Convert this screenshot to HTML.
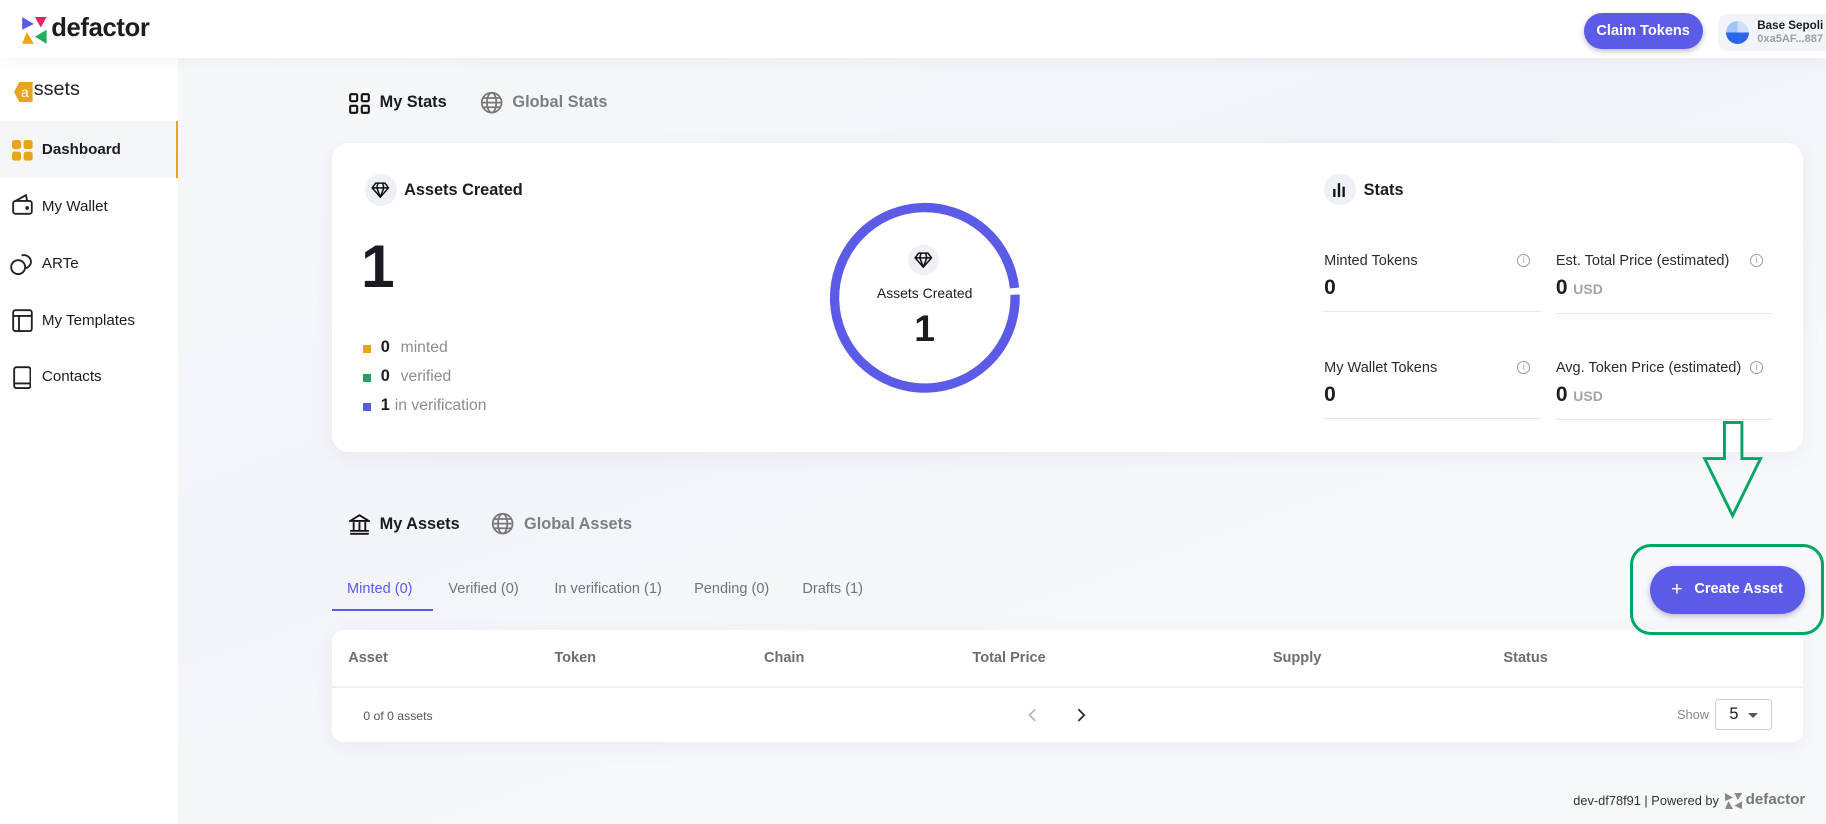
<!DOCTYPE html>
<html><head><meta charset="utf-8">
<style>
*{box-sizing:border-box;margin:0;padding:0}
html,body{width:1826px;height:824px;overflow:hidden;background:#f7f8fb}
#z{zoom:1.16454;width:1568px;height:708px;position:relative;font-family:"Liberation Sans",sans-serif;color:#1b1b22;background:linear-gradient(160deg,#f7f8fb 0%,#f2f4f9 45%,#f7f8fb 70%)}
.a{position:absolute;white-space:nowrap}
.hdr{left:0;top:0;width:1568px;height:50px;background:#fff;box-shadow:0 4px 12px rgba(0,0,0,.04);z-index:2}
.side{left:0;top:50px;width:153px;height:658px;background:#fff}
.nav{font-size:13px;color:#1b1b22}
.card{background:#fff;border-radius:14px;box-shadow:0 4px 18px rgba(30,40,90,.05)}
.ic{width:28px;height:28px;border-radius:50%;background:#edf0f4}
.lbl{font-size:12.5px;color:#2a2a33}
.val{font-size:18px;font-weight:bold}
.usd{font-size:12px;color:#a0a4ab;font-weight:bold}
.line{height:1px;background:#e3e5e8}
.info{width:11px;height:11px;border:1px solid #9a9ea5;border-radius:50%;font-size:8px;color:#9a9ea5;text-align:center;line-height:9px}
.th{font-size:12.5px;font-weight:bold;color:#6b6e75}
.tab{font-size:12.5px;color:#707379}
</style></head><body><div id="z">
<div class="a hdr">
 <svg class="a" style="left:18px;top:15px" width="22" height="23" viewBox="0 0 22 23"><polygon points="1,0 11,6 1,11" fill="#5b5be8"/><polygon points="12,0 22,0 17,9" fill="#e8245a"/><polygon points="1,23 5,13 11,23" fill="#f0a30a"/><polygon points="22,11 22,23 12,17" fill="#1fae5c"/></svg>
 <div class="a" style="left:44px;top:12px;font-size:22px;font-weight:bold;letter-spacing:-0.3px">defactor</div>
 <div class="a" style="left:1360px;top:11px;width:102px;height:31px;border-radius:16px;background:#5b5be8;color:#fff;font-size:12.5px;font-weight:bold;text-align:center;line-height:31px;box-shadow:0 2px 5px rgba(40,40,120,.3)">Claim Tokens</div>
 <div class="a" style="left:1475px;top:12px;width:100px;height:32px;border-radius:8px;background:#f3f4f7"></div>
 <div class="a" style="left:1482px;top:18px;width:20px;height:20px;border-radius:50%;background:conic-gradient(#cfe0fb 0 25%,#2b66e8 25% 75%,#a8c4f6 75%)"></div>
 <div class="a" style="left:1509px;top:16px;font-size:10px;font-weight:bold">Base Sepoli</div>
 <div class="a" style="left:1509px;top:28px;font-size:9.5px;color:#9a9ea5;font-weight:bold">0xa5AF...887</div>
</div>
<div class="a side">
 <div class="a" style="left:12px;top:20px;width:16px;height:18px;background:#e9a41e;clip-path:polygon(30% 0,100% 0,100% 100%,30% 100%,0 50%)"></div>
 <div class="a" style="left:18px;top:22px;font-size:12px;color:#fff">a</div>
 <div class="a" style="left:29px;top:17px;font-size:17px;color:#222">ssets</div>
 <div class="a" style="left:0;top:54px;width:153px;height:49px;background:#f5f6fa;border-right:2px solid #e9a41e"></div>
 <div class="a" style="left:10px;top:70px;width:8px;height:8px;background:#e9a41e;border-radius:2px;box-shadow:10px 0 #e9a41e,0 10px #e9a41e,10px 10px #e9a41e"></div>
 <div class="a nav" style="left:36px;top:71px;font-weight:bold">Dashboard</div>
 <svg class="a" style="left:10px;top:117px" width="18" height="18" viewBox="0 0 18 18" fill="none" stroke="#222" stroke-width="1.6"><rect x="1" y="6" width="16" height="11" rx="2"/><path d="M3 6 L12 1 L13 6"/><circle cx="13" cy="12" r=".8" fill="#222"/></svg>
 <div class="a nav" style="left:36px;top:120px">My Wallet</div>
 <svg class="a" style="left:9px;top:166px" width="20" height="20" viewBox="0 0 20 20" fill="none" stroke="#222" stroke-width="1.6"><circle cx="7" cy="13" r="6"/><path d="M10 3 A6 6 0 0 1 18 9 A6 6 0 0 1 13 14"/></svg>
 <div class="a nav" style="left:36px;top:169px">ARTe</div>
 <svg class="a" style="left:10px;top:215px" width="18" height="20" viewBox="0 0 18 20" fill="none" stroke="#222" stroke-width="1.6"><rect x="1" y="1" width="16" height="18" rx="2"/><path d="M1 6H17M6 6V19"/></svg>
 <div class="a nav" style="left:36px;top:218px">My Templates</div>
 <svg class="a" style="left:11px;top:264px" width="16" height="20" viewBox="0 0 16 20" fill="none" stroke="#222" stroke-width="1.6"><rect x="1" y="1" width="14" height="18" rx="2"/><path d="M1 15H15"/></svg>
 <div class="a nav" style="left:36px;top:266px">Contacts</div>
</div>
<svg class="a" style="left:300px;top:80px" width="18" height="18" viewBox="0 0 18 18" fill="none" stroke="#111" stroke-width="1.8"><rect x="1" y="1" width="6" height="6" rx="1"/><rect x="11" y="1" width="6" height="6" rx="1"/><rect x="1" y="11" width="6" height="6" rx="1"/><rect x="11" y="11" width="6" height="6" rx="1"/></svg>
<div class="a" style="left:326px;top:80px;font-size:14px;font-weight:bold">My Stats</div>
<svg class="a" style="left:412px;top:78px" width="20" height="20" viewBox="0 0 20 20" fill="none" stroke="#777" stroke-width="1.5"><circle cx="10" cy="10" r="8.5"/><ellipse cx="10" cy="10" rx="4" ry="8.5"/><path d="M1.5 10H18.5M3 6H17M3 14H17"/></svg>
<div class="a" style="left:440px;top:80px;font-size:14px;font-weight:bold;color:#7b7e84">Global Stats</div>
<div class="a card" style="left:285px;top:123px;width:1263px;height:265px"></div>
<div class="a ic" style="left:313px;top:149px"></div>
<svg class="a" style="left:319px;top:156px" width="16" height="14" viewBox="0 0 16 14" fill="none" stroke="#111" stroke-width="1.3"><path d="M4 1H12L15 5L8 13L1 5Z M1 5H15 M6 1L5 5L8 13L11 5L10 1"/></svg>
<div class="a" style="left:347px;top:155px;font-size:14px;font-weight:bold">Assets Created</div>
<div class="a" style="left:310px;top:198px;font-size:52px;font-weight:bold">1</div>
<div class="a" style="left:312px;top:296px;width:7px;height:7px;background:#e9a41e"></div>
<div class="a" style="left:327px;top:290px;font-size:14px;font-weight:bold">0</div><div class="a" style="left:344px;top:291px;font-size:13.5px;color:#8a8d93">minted</div>
<div class="a" style="left:312px;top:321px;width:7px;height:7px;background:#20a463"></div>
<div class="a" style="left:327px;top:315px;font-size:14px;font-weight:bold">0</div><div class="a" style="left:344px;top:316px;font-size:13.5px;color:#8a8d93">verified</div>
<div class="a" style="left:312px;top:346px;width:7px;height:7px;background:#5b5be8"></div>
<div class="a" style="left:327px;top:340px;font-size:14px;font-weight:bold">1</div><div class="a" style="left:339px;top:341px;font-size:13.5px;color:#8a8d93">in verification</div>
<svg class="a" style="left:710px;top:172px" width="168" height="168" viewBox="0 0 168 168"><circle cx="84" cy="84" r="77.5" fill="none" stroke="#5b5be8" stroke-width="8" stroke-dasharray="481 6" transform="rotate(-2 84 84)"/></svg>
<div class="a ic" style="left:780px;top:210px;width:26px;height:26px"></div>
<svg class="a" style="left:785px;top:216px" width="16" height="14" viewBox="0 0 16 14" fill="none" stroke="#111" stroke-width="1.3"><path d="M4 1H12L15 5L8 13L1 5Z M1 5H15 M6 1L5 5L8 13L11 5L10 1"/></svg>
<div class="a" style="left:714px;top:245px;width:160px;text-align:center;font-size:12px">Assets Created</div>
<div class="a" style="left:714px;top:264px;width:160px;text-align:center;font-size:32px;font-weight:bold">1</div>
<div class="a ic" style="left:1137px;top:149px;width:27px;height:27px"></div>
<svg class="a" style="left:1144px;top:156px" width="13" height="13" viewBox="0 0 13 13" fill="#111"><rect x="1" y="6" width="2" height="7"/><rect x="5" y="1" width="2" height="12"/><rect x="9" y="4" width="2" height="9"/></svg>
<div class="a" style="left:1171px;top:155px;font-size:14px;font-weight:bold">Stats</div>
<div class="a lbl" style="left:1137px;top:217px">Minted Tokens</div><div class="a info" style="left:1303px;top:218px">i</div>
<div class="a val" style="left:1137px;top:237px">0</div><div class="a line" style="left:1137px;top:267px;width:185px"></div>
<div class="a lbl" style="left:1336px;top:217px">Est. Total Price (estimated)</div><div class="a info" style="left:1503px;top:218px">i</div>
<div class="a val" style="left:1336px;top:237px">0 <span class="usd">USD</span></div><div class="a line" style="left:1336px;top:269px;width:186px"></div>
<div class="a lbl" style="left:1137px;top:309px">My Wallet Tokens</div><div class="a info" style="left:1303px;top:310px">i</div>
<div class="a val" style="left:1137px;top:329px">0</div><div class="a line" style="left:1137px;top:359px;width:185px"></div>
<div class="a lbl" style="left:1336px;top:309px">Avg. Token Price (estimated)</div><div class="a info" style="left:1503px;top:310px">i</div>
<div class="a val" style="left:1336px;top:329px">0 <span class="usd">USD</span></div><div class="a line" style="left:1336px;top:360px;width:186px"></div>
<svg class="a" style="left:1460px;top:360px;z-index:3" width="60" height="90" viewBox="0 0 60 90"><polygon points="21,3 36,3 36,34 52,34 28,83 4,34 21,34" fill="none" stroke="#00a664" stroke-width="2.5"/></svg>
<div class="a" style="left:1400px;top:467px;width:166px;height:78px;border:3px solid #00a664;border-radius:18px;z-index:3"></div>
<svg class="a" style="left:300px;top:441px" width="18" height="18" viewBox="0 0 18 18" fill="none" stroke="#111" stroke-width="1.6"><path d="M1 6L9 1L17 6Z M1 17H17 M1 14.5H17 M4 7V14 M9 7V14 M14 7V14"/></svg>
<div class="a" style="left:326px;top:442px;font-size:14px;font-weight:bold">My Assets</div>
<svg class="a" style="left:422px;top:440px" width="20" height="20" viewBox="0 0 20 20" fill="none" stroke="#777" stroke-width="1.5"><circle cx="10" cy="10" r="8.5"/><ellipse cx="10" cy="10" rx="4" ry="8.5"/><path d="M1.5 10H18.5M3 6H17M3 14H17"/></svg>
<div class="a" style="left:450px;top:442px;font-size:14px;font-weight:bold;color:#7b7e84">Global Assets</div>
<div class="a tab" style="left:298px;top:499px;color:#5b5be8">Minted (0)</div>
<div class="a" style="left:285px;top:523px;width:87px;height:2px;background:#5b5be8"></div>
<div class="a tab" style="left:385px;top:499px">Verified (0)</div>
<div class="a tab" style="left:476px;top:499px">In verification (1)</div>
<div class="a tab" style="left:596px;top:499px">Pending (0)</div>
<div class="a tab" style="left:689px;top:499px">Drafts (1)</div>
<div class="a" style="left:1417px;top:486px;width:133px;height:41px;border-radius:21px;background:#5b5be8;color:#fff;font-size:12.5px;font-weight:bold;line-height:41px;box-shadow:0 2px 5px rgba(40,40,120,.3)"><span style="position:absolute;left:18px;font-size:17px;font-weight:normal">+</span><span style="position:absolute;left:38px">Create Asset</span></div>
<div class="a card" style="left:285px;top:541px;width:1263px;height:96px;border-radius:10px"></div>
<div class="a line" style="left:285px;top:589px;width:1263px;height:2px;background:#eef0f3"></div>
<div class="a th" style="left:299px;top:558px">Asset</div>
<div class="a th" style="left:476px;top:558px">Token</div>
<div class="a th" style="left:656px;top:558px">Chain</div>
<div class="a th" style="left:835px;top:558px">Total Price</div>
<div class="a th" style="left:1093px;top:558px">Supply</div>
<div class="a th" style="left:1291px;top:558px">Status</div>
<div class="a" style="left:312px;top:609px;font-size:10.5px;color:#555">0 of 0 assets</div>
<svg class="a" style="left:881px;top:607px" width="60" height="14" viewBox="0 0 60 14" fill="none" stroke-width="1.6"><path d="M8 2L3 7L8 12" stroke="#bbb"/><path d="M45 2L50 7L45 12" stroke="#333"/></svg>
<div class="a" style="left:1440px;top:607px;font-size:11px;color:#888">Show</div>
<div class="a" style="left:1473px;top:600px;width:49px;height:27px;border:1px solid #ccc;border-radius:3px;background:#fff"></div>
<div class="a" style="left:1485px;top:605px;font-size:14px">5</div>
<div class="a" style="left:1501px;top:612px;border-left:4.5px solid transparent;border-right:4.5px solid transparent;border-top:5px solid #555"></div>
<div class="a" style="left:1351px;top:681px;font-size:11px;color:#333">dev-df78f91 | Powered by</div>
<svg class="a" style="left:1481px;top:681px" width="15" height="14" viewBox="0 0 15 14" fill="#888"><polygon points="0,0 7,4 0,7"/><polygon points="8,0 15,0 11,6"/><polygon points="0,14 3,7 7,14"/><polygon points="15,7 15,14 8,11"/></svg>
<div class="a" style="left:1499px;top:679px;font-size:13px;font-weight:bold;color:#777">defactor</div>
</div></body></html>
